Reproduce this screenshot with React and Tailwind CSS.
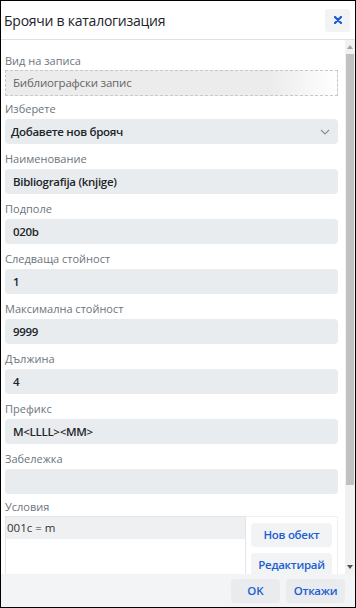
import React from 'react';

const font = { fontFamily: '"Open Sans", "Noto Sans", sans-serif' };

function Field({ label, value }) {
  return (
    <div className="mt-[7px]">
      <div className="h-4 text-[11px] leading-4 text-[#6c757d]">{label}</div>
      <div className="mt-[2px] flex h-[25px] items-center rounded-[4px] bg-[#e9ecef] px-[8px] text-[11.5px] font-semibold tracking-[-0.3px] text-[#212529]">
        {value}
      </div>
    </div>
  );
}

function Scrollbar() {
  return (
    <div className="flex w-[10px] flex-col bg-[#f1f1f1]">
      <div className="flex h-[14px] items-center justify-center">
        <svg width="6" height="4" viewBox="0 0 6 4"><path d="M0 4 L3 0 L6 4 Z" fill="#a3a3a3" /></svg>
      </div>
      <div className="mx-[1px] h-[431px] bg-[#c1c1c1]" />
      <div className="flex-1" />
      <div className="flex h-[14px] items-center justify-center">
        <svg width="6" height="4" viewBox="0 0 6 4"><path d="M0 0 L6 0 L3 4 Z" fill="#505050" /></svg>
      </div>
    </div>
  );
}

export default function App() {
  const fields = [
    ['Наименование', 'Bibliografija (knjige)'],
    ['Подполе', '020b'],
    ['Следваща стойност', '1'],
    ['Максимална стойност', '9999'],
    ['Дължина', '4'],
    ['Префикс', 'M<LLLL><MM>'],
    ['Забележка', ''],
  ];

  return (
    <div className="flex h-[608px] w-[356px] flex-col overflow-hidden border border-black bg-white" style={font}>
      {/* Header */}
      <div className="flex h-[39px] shrink-0 items-center justify-between border-b border-[#dee2e6] pl-[3px] pr-[5px]">
        <h1 className="text-[14px] tracking-[-0.25px] text-[#212529]">Броячи в каталогизация</h1>
        <button className="flex h-[23px] w-[25px] items-center justify-center rounded-[3px] bg-[#f1f3f5]">
          <svg width="8" height="8" viewBox="0 0 8 8">
            <path d="M1 1 L7 7 M7 1 L1 7" stroke="#1a56db" strokeWidth="2.2" strokeLinecap="round" />
          </svg>
        </button>
      </div>

      {/* Body */}
      <div className="flex min-h-0 flex-1">
        <div className="min-w-0 flex-1 overflow-hidden pl-[4px] pr-[7px] pt-[13px]">
          <div className="h-4 text-[11px] leading-4 text-[#6c757d]">Вид на записа</div>
          <div className="mt-[1px] flex h-[26px] items-center border border-dashed border-[#c8c8c8] bg-gradient-to-r from-[#ececec] from-80% to-white px-[7px] text-[11.5px] tracking-[-0.2px] text-[#666]">
            Библиографски запис
          </div>

          <div className="mt-[5px]">
            <div className="h-4 text-[11px] leading-4 text-[#6c757d]">Изберете</div>
            <div className="mt-[2px] flex h-[25px] items-center justify-between rounded-[4px] bg-[#e9ecef] pl-[6px] pr-[8px] text-[11.5px] font-semibold tracking-[-0.3px] text-[#212529]">
              <span>Добавете нов брояч</span>
              <svg width="10" height="6" viewBox="0 0 10 6" fill="none">
                <path d="M1 1 L5 5 L9 1" stroke="#8a8f95" strokeWidth="1.2" />
              </svg>
            </div>
          </div>

          {fields.map(([l, v]) => (
            <Field key={l} label={l} value={v} />
          ))}

          <div className="mt-[5px]">
            <div className="h-4 text-[11px] leading-4 text-[#6c757d]">Условия</div>
            <div className="mt-[1px] flex">
              <div className="h-[80px] w-[241px] border border-[#e3e5e8] bg-white">
                <div className="flex h-[22px] items-center bg-[#eef0f2] pl-[1px] text-[11.5px] text-[#333]">001c = m</div>
              </div>
              <div className="flex h-[80px] flex-1 flex-col gap-[6px] border border-l-0 border-[#eef0f2] pl-[5px] pr-[5px] pt-[6px]">
                <button className="h-[24px] w-full rounded-[4px] bg-[#f1f3f5] text-[11.5px] font-semibold tracking-[-0.3px] text-[#1a5fd0]">Нов обект</button>
                <button className="h-[24px] w-full rounded-[4px] bg-[#f1f3f5] text-[11.5px] font-semibold tracking-[-0.3px] text-[#1a5fd0]">Редактирай</button>
              </div>
            </div>
          </div>
        </div>
        <Scrollbar />
      </div>

      {/* Footer */}
      <div className="flex h-[33px] shrink-0 items-center justify-end gap-[6px] bg-[#f3f4f6] pr-[10px]">
        <button className="h-[24px] w-[49px] rounded-[4px] bg-[#e9ebee] text-[11.5px] font-semibold text-[#1a5fd0]">OK</button>
        <button className="h-[24px] w-[59px] rounded-[4px] bg-[#e9ebee] text-[11.5px] font-semibold tracking-[-0.3px] text-[#1a5fd0]">Откажи</button>
      </div>
    </div>
  );
}
